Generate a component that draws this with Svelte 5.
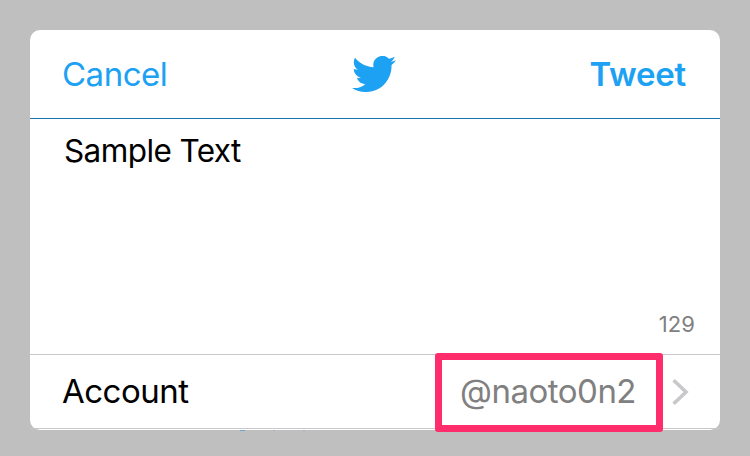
<script lang="ts">
  let text = 'Sample Text';
  let account = '@naoto0n2';
  let remaining = 129;
</script>

<main class="backdrop">
  <div class="sheet">
    <header class="bar">
      <button class="cancel">Cancel</button>
      <svg class="bird" viewBox="0 2.25 24 19.5" preserveAspectRatio="none" aria-hidden="true">
        <path
          d="M23.953 4.57a10 10 0 01-2.825.775 4.958 4.958 0 002.163-2.723c-.951.555-2.005.959-3.127 1.184a4.92 4.92 0 00-8.384 4.482C7.69 8.095 4.067 6.13 1.64 3.162a4.822 4.822 0 00-.666 2.475c0 1.71.87 3.213 2.188 4.096a4.904 4.904 0 01-2.228-.616v.06a4.923 4.923 0 003.946 4.827 4.996 4.996 0 01-2.212.085 4.936 4.936 0 004.604 3.417 9.867 9.867 0 01-6.102 2.105c-.39 0-.779-.023-1.17-.067a13.995 13.995 0 007.557 2.209c9.053 0 13.998-7.496 13.998-13.985 0-.21 0-.42-.015-.63A9.935 9.935 0 0024 4.59z"
        />
      </svg>
      <button class="tweet">Tweet</button>
    </header>

    <section class="compose">
      <p class="text">{text}</p>
      <span class="count">{remaining}</span>
    </section>

    <section class="row">
      <span class="label">Account</span>
      <span class="value">
        <span class="name">{account}</span>
        <span class="highlight"></span>
      </span>
      <svg class="chevron" viewBox="0 0 17 26" aria-hidden="true">
        <path d="M1.6 1.3L14 13L1.6 24.7" />
      </svg>
    </section>
  </div>

  <!-- tops of the page text behind the sheet -->
  <div class="behind"><i class="wide"></i><i></i><i></i></div>
</main>

<style>
  :global(body) {
    background: #bfbfbf;
  }

  .backdrop {
    box-sizing: border-box;
    height: 456px;
    padding: 30px 30px 25px;
    background: #bfbfbf;
    font-family: Inter, 'Liberation Sans', sans-serif;
  }

  .sheet {
    display: flex;
    flex-direction: column;
    height: 400px;
    border-radius: 10px;
    background: #fff;
  }

  .bar {
    box-sizing: border-box;
    display: grid;
    grid-template-columns: 1fr 44px 1fr;
    align-items: center;
    height: 89px;
    padding: 0 34px 0 32px;
    border-bottom: 1px solid #1a72b0;
  }

  button {
    padding: 0;
    border: none;
    background: none;
    color: #1da1f2;
    font: inherit;
    font-size: 33px;
    line-height: 40px;
    cursor: pointer;
  }

  .cancel {
    justify-self: start;
    letter-spacing: -0.5px;
  }

  .tweet {
    justify-self: end;
    font-weight: 600;
    letter-spacing: -0.2px;
  }

  .bird {
    width: 44px;
    height: 36px;
    fill: #1da1f2;
  }

  .compose {
    box-sizing: border-box;
    display: flex;
    flex-direction: column;
    justify-content: space-between;
    height: 236px;
    padding: 12px 25px 16px 34px;
    border-bottom: 1px solid #c8c7cc;
  }

  .text {
    margin: 0;
    color: #000;
    font-size: 31.5px;
    line-height: 40px;
    letter-spacing: -0.6px;
  }

  .count {
    align-self: flex-end;
    color: #808080;
    font-size: 22px;
    line-height: 28px;
    letter-spacing: 0.1px;
  }

  .row {
    box-sizing: border-box;
    display: flex;
    align-items: center;
    height: 74px;
    padding: 0 31px 2px 32px;
    border-bottom: 1px solid #c8c7cc;
    font-size: 33px;
    line-height: 40px;
  }

  .label {
    flex: 1;
    color: #000;
    letter-spacing: -0.5px;
  }

  .value {
    position: relative;
    margin-right: 36px;
    color: #808080;
  }

  .name {
    letter-spacing: -0.5px;
  }

  .highlight {
    position: absolute;
    box-sizing: border-box;
    top: -18px;
    right: -27px;
    width: 228px;
    height: 79px;
    border: 7px solid #ff2d6b;
    border-radius: 3px;
  }

  .chevron {
    width: 17px;
    height: 26px;
    margin-top: 2px;
    fill: none;
    stroke: #c7c7cc;
    stroke-width: 3.6;
  }

  .behind {
    display: flex;
    gap: 28px;
    height: 1px;
    padding-left: 210px;
  }

  .behind i {
    width: 2px;
    background: #9fb0bc;
  }

  .behind .wide {
    width: 5px;
    background: #6fa3c4;
  }
</style>
